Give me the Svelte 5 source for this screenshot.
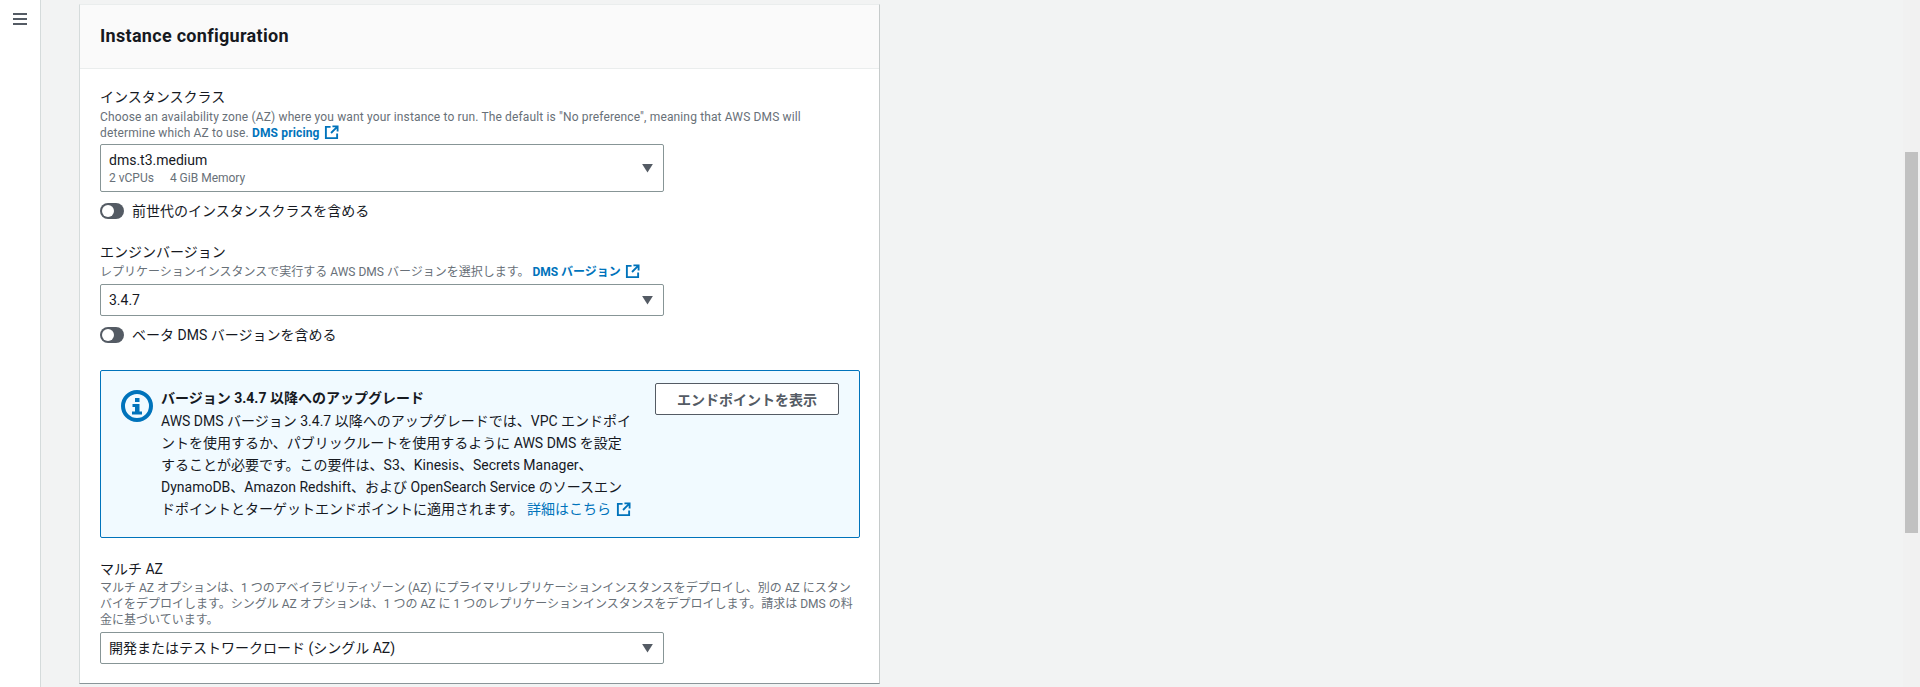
<script>
  const sidebarWidth = 40;
</script>

{#snippet ext()}
  <svg class="ext" viewBox="0 0 16 16" width="15" height="15" aria-hidden="true">
    <path d="M7 2H2v12h12V9" fill="none" stroke="currentColor" stroke-width="2" />
    <path d="M9 1.5h5.5V7M14 2L7.5 8.5" fill="none" stroke="currentColor" stroke-width="2" />
  </svg>
{/snippet}

{#snippet caret()}
  <svg class="caret" viewBox="0 0 12 10" width="11" height="9" aria-hidden="true">
    <path d="M0 0h12L6 9.5z" fill="#545b64" />
  </svg>
{/snippet}

<div class="page">
  <aside class="side" style="width: {sidebarWidth}px">
    <svg viewBox="0 0 14 12" width="14" height="12" aria-hidden="true">
      <path d="M0 1h14M0 6h14M0 11h14" stroke="#545b64" stroke-width="2" />
    </svg>
  </aside>

  <main class="content">
    <section class="card">
      <header class="card-head"><h2>Instance configuration</h2></header>
      <div class="card-body">
        <div class="field first">
          <div class="label">インスタンスクラス</div>
          <p class="desc latin">Choose an availability zone (AZ) where you want your instance to run. The default is "No preference", meaning that AWS DMS will<br />determine which AZ to use. <a href="#a" class="strong">DMS pricing {@render ext()}</a></p>
          <div class="select tall">
            <div>
              <div class="value">dms.t3.medium</div>
              <div class="sub"><span>2 vCPUs</span><span>4 GiB Memory</span></div>
            </div>
            {@render caret()}
          </div>
          <div class="toggle"><span class="track"><span class="knob"></span></span>前世代のインスタンスクラスを含める</div>
        </div>

        <div class="field engine">
          <div class="label">エンジンバージョン</div>
          <p class="desc">レプリケーションインスタンスで実行する AWS DMS バージョンを選択します。 <a href="#b" class="strong">DMS バージョン {@render ext()}</a></p>
          <div class="select"><div class="value">3.4.7</div>{@render caret()}</div>
          <div class="toggle"><span class="track"><span class="knob"></span></span>ベータ DMS バージョンを含める</div>
        </div>

        <div class="alert">
          <svg class="info" viewBox="0 0 32 32" width="32" height="32" aria-hidden="true">
            <circle cx="16" cy="16" r="14" fill="none" stroke="#0073bb" stroke-width="4" />
            <rect x="14" y="8" width="4.5" height="4" fill="#0073bb" />
            <path d="M11.5 14h7v7.5h2.5v3H11v-3h3v-4.5h-2.5z" fill="#0073bb" />
          </svg>
          <div class="alert-text">
            <div class="alert-title">バージョン 3.4.7 以降へのアップグレード</div>
            <div>AWS DMS バージョン 3.4.7 以降へのアップグレードでは、VPC エンドポイ<br />ントを使用するか、パブリックルートを使用するように AWS DMS を設定<br />することが必要です。この要件は、S3、Kinesis、Secrets Manager、<br />DynamoDB、Amazon Redshift、および OpenSearch Service のソースエン<br />ドポイントとターゲットエンドポイントに適用されます。 <a href="#c">詳細はこちら {@render ext()}</a></div>
          </div>
          <button class="btn">エンドポイントを表示</button>
        </div>

        <div class="field multi">
          <div class="label">マルチ AZ</div>
          <p class="desc tight">マルチ AZ オプションは、1 つのアベイラビリティゾーン (AZ) にプライマリレプリケーションインスタンスをデプロイし、別の AZ にスタン<br />バイをデプロイします。シングル AZ オプションは、1 つの AZ に 1 つのレプリケーションインスタンスをデプロイします。請求は DMS の料<br />金に基づいています。</p>
          <div class="select"><div class="value">開発またはテストワークロード (シングル AZ)</div>{@render caret()}</div>
        </div>
      </div>
    </section>
  </main>

  <div class="scrollbar"><div class="thumb"></div></div>
</div>

<style>
  :global(body) {
    margin: 0;
    background: #f2f3f3;
    font-family: Roboto, "Noto Sans CJK JP", sans-serif;
    color: #16191f;
  }

  .page {
    display: flex;
    height: 687px;
    overflow: hidden;
    position: relative;
  }

  .side {
    flex: none;
    background: #fff;
    border-right: 1px solid #d5dbdb;
    display: flex;
    justify-content: center;
    padding-top: 13px;
    box-sizing: content-box;
    align-items: flex-start;
  }

  .content {
    padding: 4px 0 0 38px;
  }

  .card {
    width: 801px;
    background: #fff;
    border-right: 1px solid #c6cbcb;
    border-left: 1px solid #d5dbdb;
    border-top: 1px solid #eaeded;
    border-bottom: 1px solid #8a9599;
    box-sizing: border-box;
    height: 680px;
  }

  .card-head {
    height: 64px;
    background: #fafafa;
    border-bottom: 1px solid #eaeded;
    display: flex;
    align-items: center;
    padding: 0 20px 2px;
    box-sizing: border-box;
  }

  h2 {
    margin: 0;
    font-size: 18px;
    font-weight: 700;
    line-height: 22px;
    letter-spacing: 0.3px;
  }

  .card-body {
    padding: 17px 20px 0;
  }

  .label {
    font-size: 14px;
    line-height: 22px;
  }

  .desc {
    margin: 1px 0 0;
    font-size: 12px;
    line-height: 16px;
    color: #687078;
  }

  .latin {
    letter-spacing: 0.14px;
  }

  .tight {
    margin-top: 0;
  }

  a {
    color: #0073bb;
    text-decoration: none;
  }

  .strong {
    font-weight: 700;
  }

  .ext {
    vertical-align: -3px;
    margin-left: 1px;
  }

  .select {
    width: 564px;
    height: 32px;
    margin-top: 4px;
    border: 1px solid #879596;
    border-radius: 2px;
    box-sizing: border-box;
    background: #fff;
    display: flex;
    align-items: center;
    justify-content: space-between;
    padding: 0 10px 0 8px;
  }

  .tall {
    height: 48px;
    margin-top: 3px;
  }

  .value {
    font-size: 14px;
    line-height: 20px;
  }

  .sub {
    font-size: 12px;
    line-height: 16px;
    color: #687078;
    display: flex;
    gap: 16px;
  }

  .toggle {
    display: flex;
    align-items: center;
    gap: 8px;
    margin-top: 11px;
    font-size: 14px;
    line-height: 16px;
    color: #16191f;
  }

  .track {
    width: 24px;
    height: 16px;
    border-radius: 8px;
    background: #545b64;
    display: block;
    position: relative;
    flex: none;
  }

  .knob {
    position: absolute;
    left: 2px;
    top: 2px;
    width: 12px;
    height: 12px;
    border-radius: 50%;
    background: #fff;
  }

  .engine {
    margin-top: 22px;
  }

  .alert {
    margin-top: 27px;
    width: 760px;
    height: 168px;
    box-sizing: border-box;
    border: 1px solid #0073bb;
    border-radius: 2px;
    background: #f1faff;
    display: flex;
    align-items: flex-start;
    padding: 12px 20px 0 20px;
  }

  .info {
    flex: none;
    margin: 7px 8px 0 0;
  }

  .alert-text {
    width: 474px;
    font-size: 14px;
    line-height: 22px;
    white-space: nowrap;
    margin-top: 4px;
  }

  .alert-title {
    font-weight: 700;
    margin-bottom: 1px;
  }

  .btn {
    margin-left: auto;
    width: 184px;
    height: 32px;
    border: 1px solid #545b64;
    border-radius: 2px;
    background: #fff;
    color: #545b64;
    font: 700 14px Roboto, "Noto Sans CJK JP", sans-serif;
  }

  .multi {
    margin-top: 20px;
  }

  .scrollbar {
    position: absolute;
    right: 0;
    top: 0;
    width: 17px;
    height: 687px;
    background: #f1f1f1;
  }

  .thumb {
    position: absolute;
    top: 152px;
    left: 2px;
    width: 13px;
    height: 381px;
    background: #c1c1c1;
  }
</style>
